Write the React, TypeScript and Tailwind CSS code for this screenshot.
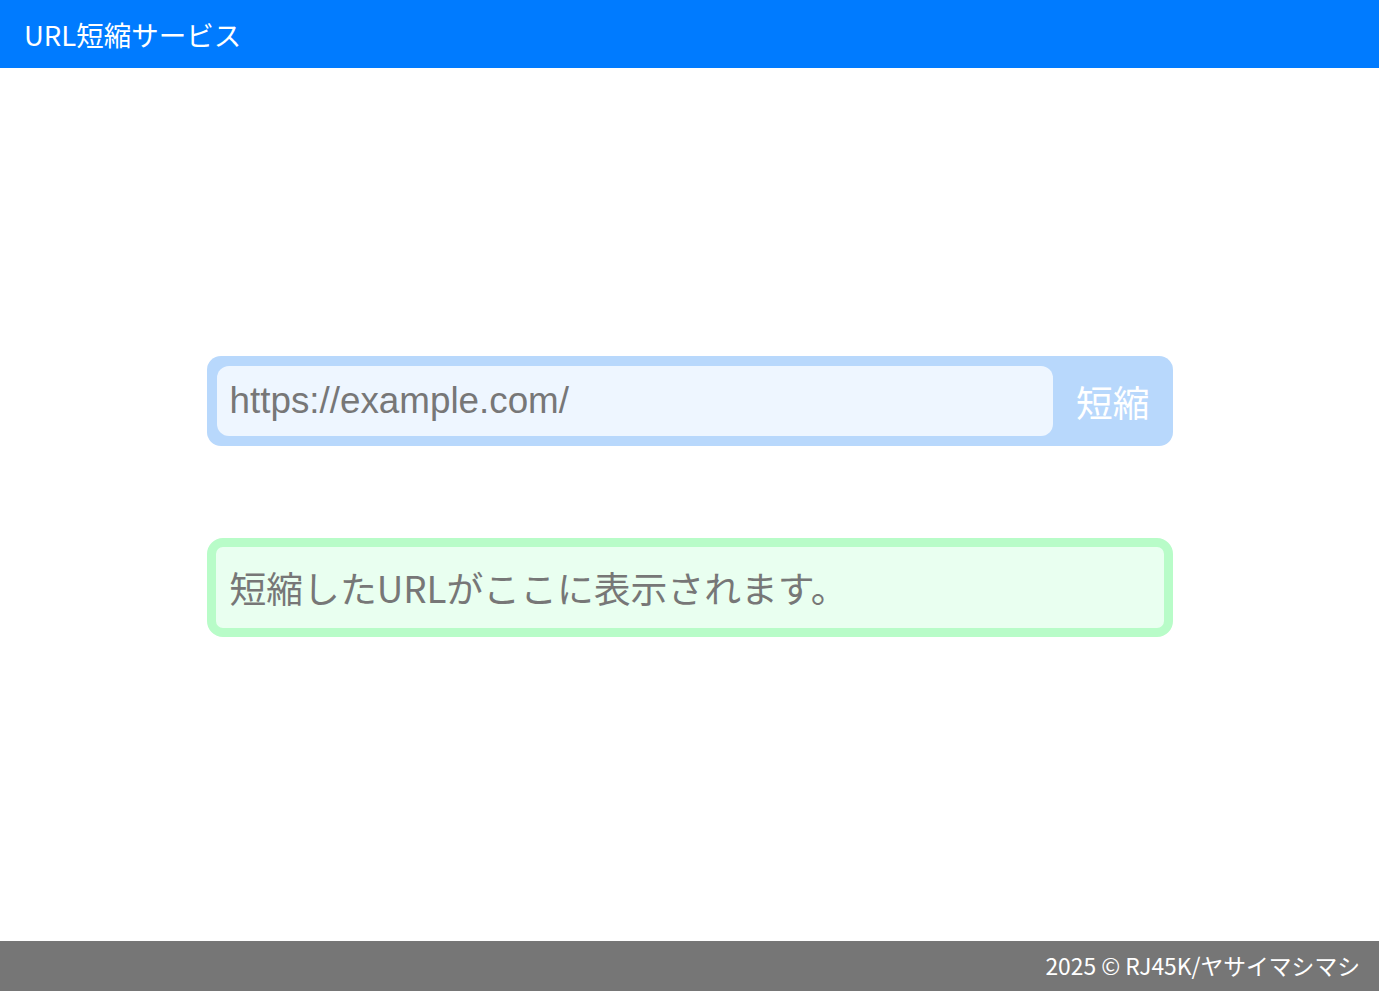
import React, { useState } from "react";

export default function App() {
  const [url, setUrl] = useState("");
  const [shortUrl] = useState("");

  return (
    <div
      className="flex min-h-screen flex-col bg-white"
      style={{ fontFamily: '"Noto Sans CJK JP", "Noto Sans", sans-serif' }}
    >
      {/* header */}
      <header className="flex h-[68px] items-center bg-[#007bff] px-6 pt-[2px]">
        <h1 className="text-[27.5px] font-normal leading-none text-white">URL短縮サービス</h1>
      </header>

      <main className="flex flex-1 flex-col items-center justify-center pb-4">
        <div className="flex w-[966px] flex-col gap-[92px]">
          {/* input bar */}
          <div className="flex h-[90px] items-stretch rounded-[14px] bg-[#b8d8fc] p-[10px] pr-0">
            <input
              type="text"
              value={url}
              onChange={(e) => setUrl(e.target.value)}
              placeholder="https://example.com/"
              className="flex-1 rounded-[12px] bg-[#eef6ff] px-[13px] text-[36.8px] text-[#777] outline-none placeholder:text-[#777]"
              style={{ fontFamily: '"Liberation Sans", Arial, sans-serif' }}
            />
            <button className="px-[23px] text-[36.8px] leading-none text-white">短縮</button>
          </div>

          {/* result */}
          <div className="flex h-[99px] items-center rounded-[16px] border-[9px] border-[#b8fcc8] bg-[#e9fff0] px-[14px]">
            <span className="text-[36.8px] text-[#777]">
              {shortUrl || "短縮したURLがここに表示されます。"}
            </span>
          </div>
        </div>
      </main>

      {/* footer */}
      <footer className="flex h-[50px] items-center justify-end bg-[#767676] px-[19px]">
        <span className="text-[22.8px] text-white">2025 © RJ45K/ヤサイマシマシ</span>
      </footer>
    </div>
  );
}
